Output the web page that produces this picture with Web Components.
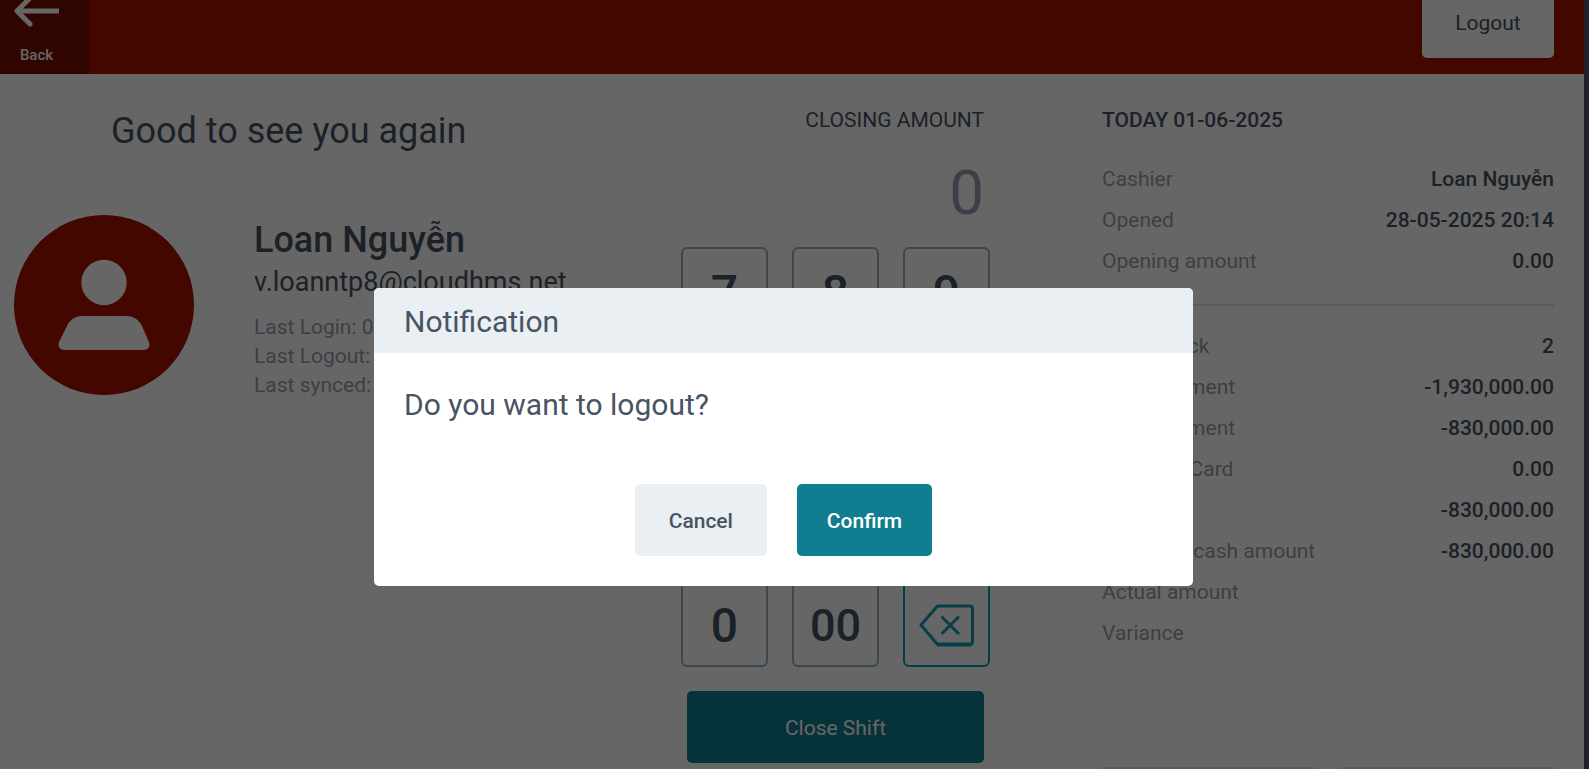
<!DOCTYPE html>
<html lang="en">
<head>
    <meta charset="utf-8">
    <meta name="viewport" content="width=device-width, initial-scale=1">
    <title>Close shift</title>
    <style>
        :root {
            --red: #a81200;
            --red-dark: #780d00;
            --teal: #117d91;
            --teal-light: #0f9fb6;
            --ink: #485463;
            --muted: #969fac;
            --key-border: #91b1c8;
            --line: #e0e0e0;
            --panel: #eaeff3;
        }

        body {
            margin: 0;
            background: #211f2b;
            color: var(--ink);
            font-family: Roboto, "Noto Sans", sans-serif;
            font-size: 21px;
            line-height: 29px;
        }
    </style>
</head>
<body>
    <shift-page></shift-page>

    <script>
        class AppButton extends HTMLElement {
            constructor() {
                super();
                this.attachShadow({ mode: 'open' });

                this.shadowRoot.innerHTML = `
                    <style>
                        :host {
                            display: block;
                        }

                        button {
                            box-sizing: border-box;
                            width: 100%;
                            min-width: 132px;
                            height: 72px;
                            padding: 2px 30px 0;
                            border: 0;
                            border-radius: 5px;
                            background: var(--button-bg, white);
                            color: var(--button-color, inherit);
                            font: inherit;
                            cursor: pointer;
                        }
                    </style>
                    <button type="button"><slot></slot></button>
                `;
            }
        }
        customElements.define("app-button", AppButton);

        class TopBar extends HTMLElement {
            constructor() {
                super();
                this.attachShadow({ mode: 'open' });

                this.shadowRoot.innerHTML = `
                    <style>
                        :host {
                            display: flex;
                            justify-content: space-between;
                            align-items: flex-end;
                            height: 74px;
                            padding-right: 30px;
                            overflow: hidden;
                            background: var(--red);
                        }

                        .back {
                            display: flex;
                            flex-direction: column;
                            align-items: flex-start;
                            justify-content: flex-end;
                            gap: 16px;
                            box-sizing: border-box;
                            width: 89px;
                            height: 104px;
                            padding: 0 14px 8px;
                            background: var(--red-dark);
                            color: white;
                            font-size: 15px;
                            font-weight: 500;
                            line-height: 22px;
                            text-decoration: none;
                        }

                        .back span {
                            width: 45px;
                            text-align: center;
                        }

                        svg {
                            display: block;
                            flex: none;
                        }

                        app-button {
                            margin-bottom: 16px;
                        }
                    </style>
                    <a class="back" href="#">
                        <svg width="45" height="34" viewBox="0 0 45 34" fill="none" stroke="currentColor" stroke-width="5" stroke-linecap="round" stroke-linejoin="round" aria-hidden="true">
                            <path d="M16 4 3 17l13 13" />
                            <path d="M3 17h42" stroke-linecap="butt" />
                        </svg>
                        <span>Back</span>
                    </a>
                    <app-button>Logout</app-button>
                `;
            }
        }
        customElements.define("top-bar", TopBar);

        class UserProfile extends HTMLElement {
            constructor() {
                super();
                this.attachShadow({ mode: 'open' });

                this.shadowRoot.innerHTML = `
                    <style>
                        :host {
                            display: block;
                        }

                        h1 {
                            margin: 0 0 59px 97px;
                            font-size: 36px;
                            font-weight: 400;
                            line-height: 50px;
                        }

                        .profile {
                            display: flex;
                            gap: 60px;
                        }

                        svg {
                            flex: none;
                            width: 180px;
                            height: 180px;
                        }

                        h2 {
                            margin: 3px 0 0;
                            font-size: 36px;
                            font-weight: 500;
                            line-height: 44px;
                        }

                        p {
                            margin: 0;
                            color: var(--muted);
                            white-space: nowrap;
                        }

                        .email {
                            margin-bottom: 11px;
                            color: inherit;
                            font-size: 27px;
                            line-height: 40px;
                        }
                    </style>
                    <h1>Good to see you again</h1>
                    <div class="profile">
                        <svg viewBox="0 0 180 180" aria-hidden="true">
                            <circle cx="90" cy="90" r="90" fill="var(--red)" />
                            <circle cx="90" cy="67.5" r="22.7" fill="white" />
                            <path fill="white" d="M68 101h44c8 0 13 4 16 10l6.500 15c2.500 5-.500 9-5 9H50.500c-4.500 0-7.500-4-5-9L54 109c3-5 8-8 14-8z" />
                        </svg>
                        <div>
                            <h2><slot name="name"></slot></h2>
                            <p class="email"><slot name="email"></slot></p>
                            <slot></slot>
                        </div>
                    </div>
                `;
            }
        }
        customElements.define("user-profile", UserProfile);

        class KeyPad extends HTMLElement {
            constructor() {
                super();
                this.attachShadow({ mode: 'open' });

                const digits = ["7", "8", "9", "4", "5", "6", "1", "2", "3", "0"];

                this.shadowRoot.innerHTML = `
                    <style>
                        :host {
                            display: block;
                        }

                        .amount {
                            display: block;
                            padding-right: 6px;
                            text-align: right;
                            text-transform: uppercase;
                        }

                        input {
                            display: block;
                            box-sizing: border-box;
                            width: 100%;
                            height: 72px;
                            margin: 22px 0 18px;
                            padding: 0 6px 0 0;
                            border: 0;
                            background: none;
                            color: var(--muted);
                            font: inherit;
                            font-size: 62px;
                            line-height: 72px;
                            text-align: right;
                        }

                        .keys {
                            display: grid;
                            grid-template-columns: repeat(3, 1fr);
                            gap: 24px;
                            margin-bottom: 24px;
                        }

                        .keys button {
                            display: flex;
                            align-items: center;
                            justify-content: center;
                            box-sizing: border-box;
                            height: 87px;
                            padding: 4px 0 0;
                            border: 2px solid var(--key-border);
                            border-radius: 6px;
                            background: none;
                            color: inherit;
                            font: inherit;
                            font-size: 48px;
                            font-weight: 500;
                            cursor: pointer;
                        }

                        .keys .double {
                            font-size: 45px;
                        }

                        .keys .erase {
                            border-color: var(--teal-light);
                            color: var(--teal-light);
                        }

                        app-button {
                            --button-bg: var(--teal);
                            --button-color: white;
                            margin: 0 6px;
                        }
                    </style>
                    <label class="amount" for="amount">Closing amount</label>
                    <input id="amount" type="text" inputmode="numeric" value="0">
                    <div class="keys">
                        ${digits.map(digit => `<button type="button">${digit}</button>`).join("")}
                        <button type="button" class="double">00</button>
                        <button type="button" class="erase" aria-label="Erase">
                            <svg width="55" height="43" viewBox="0 0 55 43" fill="none" stroke="currentColor" stroke-width="3" stroke-linejoin="round" aria-hidden="true">
                                <path d="M18.500 2H51q2.500 0 2.500 2.500v33.500q0 2.500-2.500 2.500H18.500L2 21z" />
                                <path d="M18 40.500h34" stroke-width="4" />
                                <path d="m22.500 12.500 17.500 17.500m0-17.500L22.500 30" />
                            </svg>
                        </button>
                    </div>
                    <app-button>Close Shift</app-button>
                `;
            }
        }
        customElements.define("key-pad", KeyPad);

        class ShiftReport extends HTMLElement {
            constructor() {
                super();
                this.attachShadow({ mode: 'open' });

                const shift = [
                    ["Cashier", "Loan Nguyễn"],
                    ["Opened", "28-05-2025 20:14"],
                    ["Opening amount", "0.00"]
                ];
                const totals = [
                    ["Total check", "2"],
                    ["Total payment", "-1,930,000.00"],
                    ["Total payment", "-830,000.00"],
                    ["Payment Card", "0.00"],
                    ["Cash", "-830,000.00"],
                    ["Expected cash amount", "-830,000.00"],
                    ["Actual amount", ""],
                    ["Variance", ""]
                ];

                this.shadowRoot.innerHTML = `
                    <style>
                        :host {
                            display: block;
                        }

                        h2 {
                            margin: 0 0 24px;
                            font-size: 21px;
                            font-weight: 500;
                            text-transform: uppercase;
                        }

                        table {
                            width: 100%;
                            border-collapse: collapse;
                        }

                        th, td {
                            height: 41px;
                            padding: 0;
                            white-space: nowrap;
                        }

                        th {
                            color: var(--muted);
                            font-weight: 400;
                            text-align: left;
                        }

                        td {
                            font-weight: 500;
                            text-align: right;
                        }

                        hr {
                            height: 2px;
                            margin: 22px 0 20px;
                            border: 0;
                            background: var(--line);
                        }

                        .actions {
                            display: grid;
                            grid-template-columns: 1fr 1fr;
                            gap: 26px;
                            margin-top: 113px;
                        }

                        app-button {
                            --button-bg: var(--line);
                        }
                    </style>
                    <h2>Today 01-06-2025</h2>
                    <table>${this.rows(shift)}</table>
                    <hr>
                    <table>${this.rows(totals)}</table>
                    <div class="actions">
                        <app-button></app-button>
                        <app-button></app-button>
                    </div>
                `;
            }

            rows(items) {
                return items.map(([label, value]) => `
                    <tr><th scope="row">${label}</th><td>${value}</td></tr>
                `).join("");
            }
        }
        customElements.define("shift-report", ShiftReport);

        class ConfirmDialog extends HTMLElement {
            constructor() {
                super();
                this.attachShadow({ mode: 'open' });

                this.shadowRoot.innerHTML = `
                    <style>
                        :host {
                            position: absolute;
                            inset: 0;
                            display: flex;
                            justify-content: center;
                            align-items: flex-start;
                            padding: 288px 17px 0 0;
                            background: rgba(0, 0, 0, 0.6);
                        }

                        .dialog {
                            width: 100%;
                            max-width: 819px;
                            overflow: hidden;
                            border-radius: 5px;
                            background: white;
                        }

                        h2, p {
                            margin: 0;
                            padding: 0 30px;
                            font-size: 30px;
                            font-weight: 400;
                            line-height: 40px;
                        }

                        h2 {
                            padding-top: 14px;
                            padding-bottom: 11px;
                            background: var(--panel);
                        }

                        p {
                            padding-top: 32px;
                            padding-bottom: 59px;
                        }

                        .actions {
                            display: flex;
                            justify-content: center;
                            gap: 30px;
                            padding-bottom: 30px;
                            font-weight: 500;
                        }

                        .cancel {
                            --button-bg: var(--panel);
                        }

                        .confirm {
                            --button-bg: var(--teal);
                            --button-color: white;
                        }
                    </style>
                    <div class="dialog" role="dialog" aria-modal="true" aria-labelledby="title">
                        <h2 id="title"><slot name="title"></slot></h2>
                        <p><slot></slot></p>
                        <div class="actions">
                            <app-button class="cancel">Cancel</app-button>
                            <app-button class="confirm">Confirm</app-button>
                        </div>
                    </div>
                `;
            }
        }
        customElements.define("confirm-dialog", ConfirmDialog);

        class ShiftPage extends HTMLElement {
            constructor() {
                super();
                this.attachShadow({ mode: 'open' });

                this.shadowRoot.innerHTML = `
                    <style>
                        :host {
                            position: relative;
                            display: block;
                            height: 100vh;
                            margin-right: 5px;
                            overflow: hidden;
                            background: white;
                        }

                        main {
                            display: grid;
                            grid-template-columns: minmax(0, 1fr) 309px minmax(0, 452px);
                            gap: 112px;
                            padding: 32px 30px 0 14px;
                        }

                        p {
                            margin: 0;
                            color: var(--muted);
                            white-space: nowrap;
                        }
                    </style>
                    <top-bar></top-bar>
                    <main>
                        <user-profile>
                            <span slot="name">Loan Nguyễn</span>
                            <span slot="email">v.loanntp8@cloudhms.net</span>
                            <p>Last Login: 01-06-2025</p>
                            <p>Last Logout: 31-05-2025</p>
                            <p>Last synced: 01-06-2025</p>
                        </user-profile>
                        <key-pad></key-pad>
                        <shift-report></shift-report>
                    </main>
                    <confirm-dialog>
                        <span slot="title">Notification</span>
                        Do you want to logout?
                    </confirm-dialog>
                `;
            }
        }
        customElements.define("shift-page", ShiftPage);
    </script>
</body>
</html>
